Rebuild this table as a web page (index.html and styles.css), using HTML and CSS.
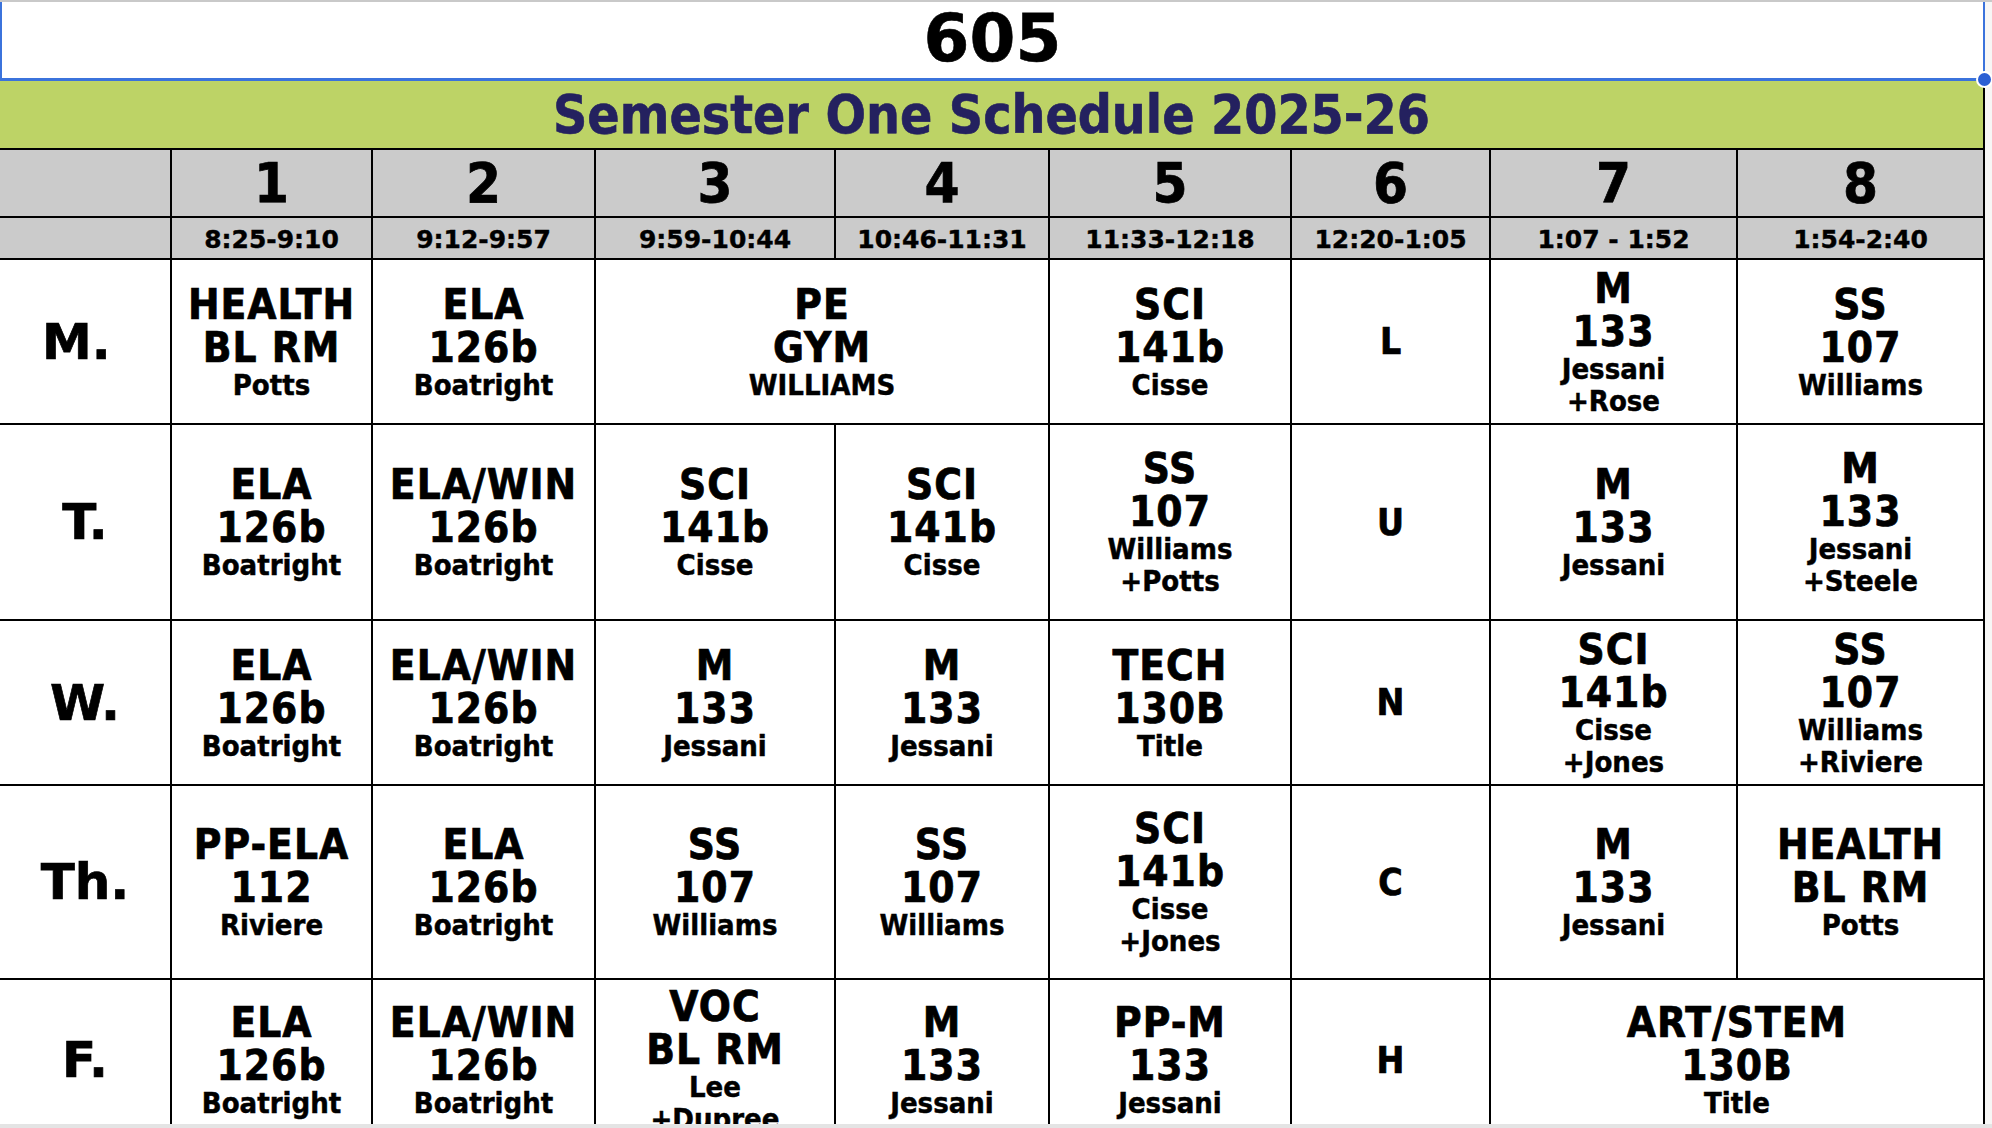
FILE: index.html
```html
<!DOCTYPE html>
<html lang="en">
<head>
<meta charset="utf-8">
<title>605 Schedule</title>
<link rel="stylesheet" href="styles.css">
</head>
<body>
<div class="sheet">
  <div class="topline"></div>
  <div class="name-cell">605<span class="handle"></span></div>
  <div class="banner">Semester One Schedule 2025-26</div>
  <div class="grid">
    <div class="cell head"></div>
    <div class="cell head num">1</div>
    <div class="cell head num">2</div>
    <div class="cell head num">3</div>
    <div class="cell head num">4</div>
    <div class="cell head num">5</div>
    <div class="cell head num">6</div>
    <div class="cell head num">7</div>
    <div class="cell head num">8</div>

    <div class="cell head"></div>
    <div class="cell head time">8:25-9:10</div>
    <div class="cell head time">9:12-9:57</div>
    <div class="cell head time">9:59-10:44</div>
    <div class="cell head time">10:46-11:31</div>
    <div class="cell head time">11:33-12:18</div>
    <div class="cell head time">12:20-1:05</div>
    <div class="cell head time">1:07 - 1:52</div>
    <div class="cell head time">1:54-2:40</div>

    <div class="cell day">M. </div>
    <div class="cell"><div class="big">HEALTH</div><div class="big">BL RM</div><div class="small">Potts</div></div>
    <div class="cell"><div class="big">ELA</div><div class="big">126b</div><div class="small">Boatright</div></div>
    <div class="cell span2"><div class="big">PE</div><div class="big">GYM</div><div class="small">WILLIAMS</div></div>
    <div class="cell"><div class="big">SCI</div><div class="big">141b</div><div class="small">Cisse</div></div>
    <div class="cell lunch">L</div>
    <div class="cell"><div class="big">M</div><div class="big">133</div><div class="small">Jessani</div><div class="small">+Rose</div></div>
    <div class="cell"><div class="big">SS</div><div class="big">107</div><div class="small">Williams</div></div>

    <div class="cell day">T.</div>
    <div class="cell"><div class="big">ELA</div><div class="big">126b</div><div class="small">Boatright</div></div>
    <div class="cell"><div class="big">ELA/WIN</div><div class="big">126b</div><div class="small">Boatright</div></div>
    <div class="cell"><div class="big">SCI</div><div class="big">141b</div><div class="small">Cisse</div></div>
    <div class="cell"><div class="big">SCI</div><div class="big">141b</div><div class="small">Cisse</div></div>
    <div class="cell"><div class="big">SS</div><div class="big">107</div><div class="small">Williams</div><div class="small">+Potts</div></div>
    <div class="cell lunch">U</div>
    <div class="cell"><div class="big">M</div><div class="big">133</div><div class="small">Jessani</div></div>
    <div class="cell"><div class="big">M</div><div class="big">133</div><div class="small">Jessani</div><div class="small">+Steele</div></div>

    <div class="cell day">W.</div>
    <div class="cell"><div class="big">ELA</div><div class="big">126b</div><div class="small">Boatright</div></div>
    <div class="cell"><div class="big">ELA/WIN</div><div class="big">126b</div><div class="small">Boatright</div></div>
    <div class="cell"><div class="big">M</div><div class="big">133</div><div class="small">Jessani</div></div>
    <div class="cell"><div class="big">M</div><div class="big">133</div><div class="small">Jessani</div></div>
    <div class="cell"><div class="big">TECH</div><div class="big">130B</div><div class="small">Title</div></div>
    <div class="cell lunch">N</div>
    <div class="cell"><div class="big">SCI</div><div class="big">141b</div><div class="small">Cisse</div><div class="small">+Jones</div></div>
    <div class="cell"><div class="big">SS</div><div class="big">107</div><div class="small">Williams</div><div class="small">+Riviere</div></div>

    <div class="cell day">Th.</div>
    <div class="cell"><div class="big">PP-ELA</div><div class="big">112</div><div class="small">Riviere</div></div>
    <div class="cell"><div class="big">ELA</div><div class="big">126b</div><div class="small">Boatright</div></div>
    <div class="cell"><div class="big">SS</div><div class="big">107</div><div class="small">Williams</div></div>
    <div class="cell"><div class="big">SS</div><div class="big">107</div><div class="small">Williams</div></div>
    <div class="cell"><div class="big">SCI</div><div class="big">141b</div><div class="small">Cisse</div><div class="small">+Jones</div></div>
    <div class="cell lunch">C</div>
    <div class="cell"><div class="big">M</div><div class="big">133</div><div class="small">Jessani</div></div>
    <div class="cell"><div class="big">HEALTH</div><div class="big">BL RM</div><div class="small">Potts</div></div>

    <div class="cell day">F.</div>
    <div class="cell"><div class="big">ELA</div><div class="big">126b</div><div class="small">Boatright</div></div>
    <div class="cell"><div class="big">ELA/WIN</div><div class="big">126b</div><div class="small">Boatright</div></div>
    <div class="cell"><div class="big">VOC</div><div class="big">BL RM</div><div class="small">Lee</div><div class="small">+Dupree</div></div>
    <div class="cell"><div class="big">M</div><div class="big">133</div><div class="small">Jessani</div></div>
    <div class="cell"><div class="big">PP-M</div><div class="big">133</div><div class="small">Jessani</div></div>
    <div class="cell lunch">H</div>
    <div class="cell span2"><div class="big">ART/STEM</div><div class="big">130B</div><div class="small">Title</div></div>
  </div>
</div>
<div class="hscroll"></div>
</body>
</html>
```

FILE: styles.css
```css
html, body {
  margin: 0;
  padding: 0;
  background: #f7f7f6;
}

body {
  width: 1992px;
  height: 1128px;
  overflow: hidden;
  font-family: "DejaVu Sans Condensed", "DejaVu Sans", sans-serif;
  font-weight: bold;
  color: #000;
}

.sheet {
  width: 1985px;
  display: flex;
  flex-direction: column;
  background: #fff;
}

.topline {
  height: 2px;
  background: #c9c9c9;
  width: 1992px;
}

.name-cell {
  position: relative;
  background: #fff;
  border-left: 2px solid #3b73dc;
  border-right: 2px solid #3b73dc;
  border-bottom: 3px solid #3b73dc;
  display: flex;
  align-items: center;
  justify-content: center;
  font-family: "DejaVu Sans", sans-serif;
  font-size: 66px;
  line-height: 1;
  padding-bottom: 2px;
  box-sizing: content-box;
  height: 74px;
  -webkit-text-stroke: 0.6px #000;
}

.handle {
  position: absolute;
  right: -10px;
  bottom: -10px;
  width: 13px;
  height: 13px;
  border-radius: 50%;
  background: #2b5fd3;
  border: 2px solid #ffffff;
}

.banner {
  height: 67px;
  background: #bdd366;
  color: #24215f;
  font-size: 53px;
  display: flex;
  align-items: center;
  justify-content: center;
  border-right: 2px solid #000;
  -webkit-text-stroke: 0.6px #24215f;
}

.grid {
  display: grid;
  grid-template-columns: 170px 199px 221px 238px 212px 240px 197px 245px 245px;
  grid-template-rows: 66px 40px 163px 194px 163px 192px 160px;
  gap: 2px;
  background: #000;
  border-top: 2px solid #000;
  border-right: 2px solid #000;
}

.cell {
  background: #fff;
  display: flex;
  flex-direction: column;
  align-items: center;
  justify-content: center;
  text-align: center;
  -webkit-text-stroke: 0.7px #000;
}

.head {
  background: #cbcbcb;
}

.num {
  font-size: 56px;
  line-height: 1;
}

.time {
  font-family: "DejaVu Sans", sans-serif;
  font-size: 25px;
  line-height: 1;
  padding-top: 2px;
  -webkit-text-stroke: 0.4px #000;
}

.day {
  font-family: "DejaVu Sans", sans-serif;
  font-size: 50px;
  line-height: 1;
  white-space: pre;
}

.lunch {
  font-size: 37px;
  line-height: 1;
}

.span2 {
  grid-column: span 2;
}

.big {
  font-size: 42px;
  line-height: 43px;
  letter-spacing: 1px;
  white-space: nowrap;
}

.small {
  font-size: 29px;
  line-height: 32px;
  white-space: nowrap;
  -webkit-text-stroke: 0.45px #000;
}

.hscroll {
  position: fixed;
  left: 0;
  bottom: 0;
  width: 1992px;
  height: 4px;
  background: #e4e4e4;
}
```
